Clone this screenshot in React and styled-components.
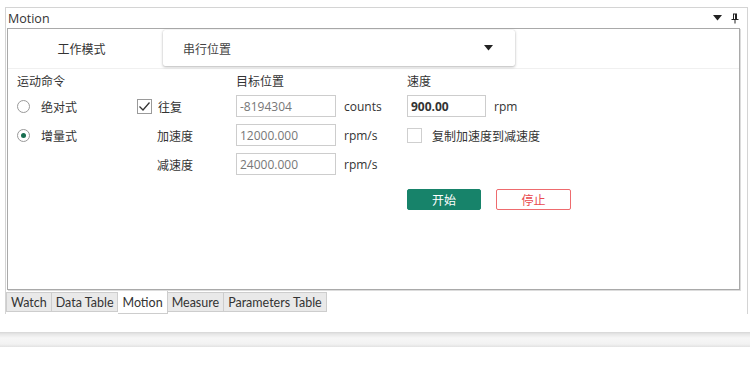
import React from "react";
import styled, { createGlobalStyle } from "styled-components";

const GlobalStyle = createGlobalStyle`
  html, body {
    margin: 0;
    padding: 0;
    background: #ffffff;
  }
  body {
    font-family: "Open Sans", "Noto Sans CJK SC", sans-serif;
    font-size: 12px;
    color: #333;
  }
`;

const Page = styled.div`
  width: 750px;
  height: 368px;
  padding-top: 7px;
  box-sizing: border-box;
  display: flex;
  flex-direction: column;
`;

const Frame = styled.div`
  margin-left: 5px;
  width: 741px;
  border: 1px solid #d4d4d4;
  border-bottom: none;
  display: flex;
  flex-direction: column;
  flex-shrink: 0;
`;

const Header = styled.div`
  height: 20px;
  flex-shrink: 0;
  display: flex;
  align-items: center;
  padding-left: 2px;
  padding-right: 8px;
  font-size: 12.5px;
  color: #333;
`;

const HeaderTitle = styled.span`
  flex: 1;
`;

const HeaderIcons = styled.div`
  display: flex;
  align-items: center;
  gap: 9px;
`;

const Box = styled.div`
  margin-left: 1px;
  width: 733px;
  height: 262px;
  flex-shrink: 0;
  box-sizing: border-box;
  border: 1px solid #a9a9a9;
  box-shadow: 1px 1px 0 #dcdcdc;
  background: #fff;
  display: flex;
  flex-direction: column;
`;

const ModeRow = styled.div`
  height: 39px;
  flex-shrink: 0;
  display: flex;
  border-bottom: 1px solid #f0f0f0;
`;

const ModeLabel = styled.div`
  width: 147px;
  display: flex;
  align-items: center;
  justify-content: center;
  font-family: "Noto Sans CJK SC", sans-serif;
  color: #333;
`;

const Dropdown = styled.div`
  margin-left: 8px;
  margin-top: 1px;
  width: 352px;
  height: 36px;
  box-sizing: border-box;
  display: flex;
  align-items: center;
  padding-left: 20px;
  padding-right: 22px;
  background: #fff;
  border-radius: 2px;
  box-shadow: 0 1px 3px rgba(0, 0, 0, 0.28), 0 0 1px rgba(0, 0, 0, 0.15);
  font-family: "Noto Sans CJK SC", sans-serif;
  color: #444;
`;

const DropText = styled.span`
  flex: 1;
`;

const Form = styled.div`
  display: grid;
  grid-template-columns: 120px 99px 100px 71px 1fr;
  grid-template-rows: 16px 22px 22px 22px 28px;
  row-gap: 7px;
  padding: 3px 0 0 9px;
  align-items: center;
`;

const Caption = styled.div`
  font-family: "Noto Sans CJK SC", sans-serif;
  color: #333;
  grid-column: ${(p) => p.$col};
  grid-row: ${(p) => p.$row};
  padding-left: ${(p) => p.$indent || 0}px;
`;

const Cell = styled.div`
  display: flex;
  align-items: center;
  gap: ${(p) => p.$gap || 0}px;
  grid-column: ${(p) => p.$col};
  grid-row: ${(p) => p.$row};
  align-self: ${(p) => (p.$bottom ? "end" : "center")};
`;

const Unit = styled.span`
  padding-left: 8px;
  color: #333;
  grid-column: ${(p) => p.$col};
  grid-row: ${(p) => p.$row};
`;

const RadioCircle = styled.span`
  width: 13px;
  height: 13px;
  box-sizing: border-box;
  border-radius: 50%;
  border: 1px solid #999;
  display: flex;
  align-items: center;
  justify-content: center;
  &::after {
    content: "";
    width: 5px;
    height: 5px;
    border-radius: 50%;
    background: ${(p) => (p.$on ? "#176e50" : "transparent")};
  }
`;

const CheckBox = styled.span`
  width: 15px;
  height: 15px;
  box-sizing: border-box;
  border: 1px solid ${(p) => (p.$checked ? "#9a9a9a" : "#cfcfcf")};
  display: flex;
  align-items: center;
  justify-content: center;
`;

const Input = styled.div`
  width: ${(p) => p.$w || 100}px;
  height: 22px;
  box-sizing: border-box;
  border: 1px solid #cdcdcd;
  padding-left: 3px;
  display: flex;
  align-items: center;
  color: ${(p) => (p.$bold ? "#333" : "#777")};
  font-weight: ${(p) => (p.$bold ? 700 : 400)};
`;

const Button = styled.div`
  width: ${(p) => p.$w}px;
  height: 21px;
  box-sizing: border-box;
  border-radius: 2px;
  display: flex;
  align-items: center;
  justify-content: center;
  font-family: "Noto Sans CJK SC", sans-serif;
  background: ${(p) => (p.$primary ? "#17836a" : "#fff")};
  color: ${(p) => (p.$primary ? "#fff" : "#e84a4f")};
  border: 1px solid ${(p) => (p.$primary ? "#17836a" : "#ee6b6e")};
`;

const Tabs = styled.div`
  display: flex;
  margin-left: 0px;
  margin-top: 2px;
  align-items: flex-start;
`;

const Tab = styled.div`
  height: ${(p) => (p.$active ? 23 : 20)}px;
  margin-top: ${(p) => (p.$active ? -1 : 0)}px;
  box-sizing: border-box;
  padding: 0 4px;
  display: flex;
  align-items: center;
  font-family: "Lato", sans-serif;
  font-size: 12.5px;
  color: #333;
  background: ${(p) => (p.$active ? "#ffffff" : "#e9e9e9")};
  border: 1px solid #cdcdcd;
  border-top: ${(p) => (p.$active ? "none" : "1px solid #cdcdcd")};
  border-left: ${(p) => (p.$first ? "1px solid #cdcdcd" : "none")};
`;

const Bar = styled.div`
  margin-top: 18px;
  height: 15px;
  width: 750px;
  flex-shrink: 0;
  background: linear-gradient(
    to bottom,
    #d6d6d6 0px,
    #e6e6e6 2px,
    #f6f6f6 6px,
    #f2f2f2 12px,
    #e2e2e2 15px
  );
`;

const Caret = () => (
  <svg width="9" height="6" viewBox="0 0 9 6">
    <path d="M0 0 L9 0 L4.5 5.5 Z" fill="#222" />
  </svg>
);

const Pin = () => (
  <svg width="8" height="11" viewBox="0 0 8 11">
    <path
      d="M2 0.5 H6 V6 H7.5 V7 H4.5 V10.5 H3.5 V7 H0.5 V6 H2 Z M3 1.5 V6 H4 V1.5 Z"
      fill="#222"
      fillRule="evenodd"
    />
  </svg>
);

const Check = () => (
  <svg width="13" height="11" viewBox="0 0 13 11">
    <path d="M1.5 5.5 L5 9 L11.5 1.5" fill="none" stroke="#333" strokeWidth="1.3" />
  </svg>
);

const tabs = ["Watch", "Data Table", "Motion", "Measure", "Parameters Table"];

export default function App() {
  return (
    <>
      <GlobalStyle />
      <Page>
        <Frame>
          <Header>
            <HeaderTitle>Motion</HeaderTitle>
            <HeaderIcons>
              <Caret />
              <Pin />
            </HeaderIcons>
          </Header>
          <Box>
            <ModeRow>
              <ModeLabel>工作模式</ModeLabel>
              <Dropdown>
                <DropText>串行位置</DropText>
                <Caret />
              </Dropdown>
            </ModeRow>
            <Form>
              <Caption $col={1} $row={1}>运动命令</Caption>
              <Caption $col={3} $row={1}>目标位置</Caption>
              <Caption $col={5} $row={1}>速度</Caption>

              <Cell $col={1} $row={2} $gap={11}>
                <RadioCircle />
                <Caption>绝对式</Caption>
              </Cell>
              <Cell $col={2} $row={2} $gap={6}>
                <CheckBox $checked>
                  <Check />
                </CheckBox>
                <Caption>往复</Caption>
              </Cell>
              <Cell $col={3} $row={2}>
                <Input>-8194304</Input>
              </Cell>
              <Unit $col={4} $row={2}>counts</Unit>
              <Cell $col={5} $row={2} $gap={8}>
                <Input $w={79} $bold>900.00</Input>
                <span>rpm</span>
              </Cell>

              <Cell $col={1} $row={3} $gap={11}>
                <RadioCircle $on />
                <Caption>增量式</Caption>
              </Cell>
              <Caption $col={2} $row={3} $indent={20}>加速度</Caption>
              <Cell $col={3} $row={3}>
                <Input>12000.000</Input>
              </Cell>
              <Unit $col={4} $row={3}>rpm/s</Unit>
              <Cell $col={5} $row={3} $gap={10}>
                <CheckBox />
                <Caption>复制加速度到减速度</Caption>
              </Cell>

              <Caption $col={2} $row={4} $indent={20}>减速度</Caption>
              <Cell $col={3} $row={4}>
                <Input>24000.000</Input>
              </Cell>
              <Unit $col={4} $row={4}>rpm/s</Unit>

              <Cell $col={5} $row={5} $gap={15} $bottom>
                <Button $w={74} $primary>开始</Button>
                <Button $w={75}>停止</Button>
              </Cell>
            </Form>
          </Box>
          <Tabs>
            {tabs.map((t, i) => (
              <Tab key={t} $active={t === "Motion"} $first={i === 0}>
                {t}
              </Tab>
            ))}
          </Tabs>
        </Frame>
        <Bar />
      </Page>
    </>
  );
}
